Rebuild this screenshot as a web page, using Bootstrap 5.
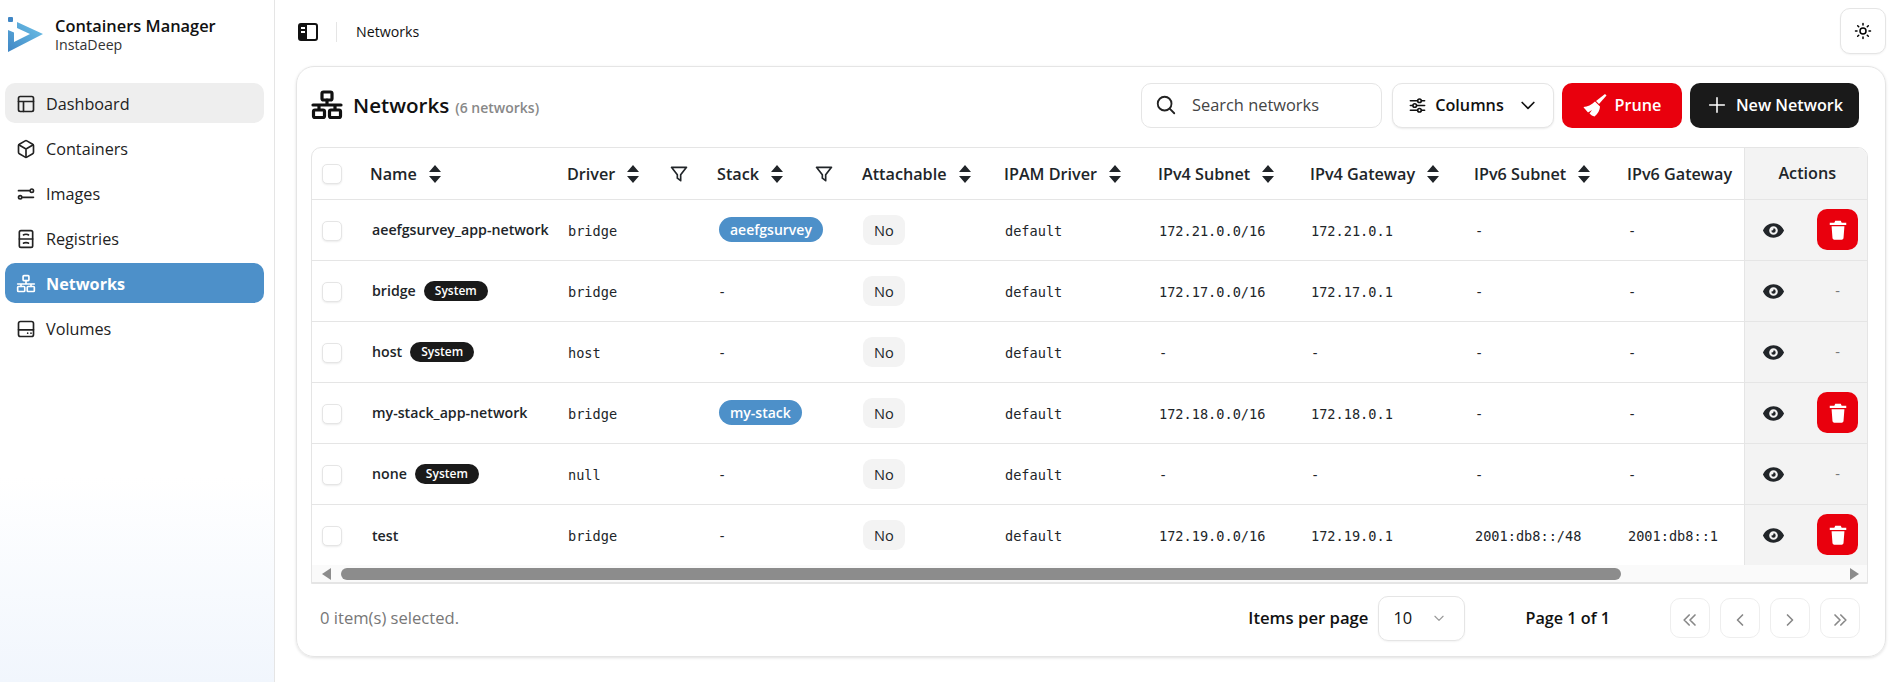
<!DOCTYPE html>
<html lang="en">
<head>
    <meta charset="UTF-8">
    <meta name="viewport" content="width=device-width, initial-scale=1.0">
    <title>Networks</title>
    <link href="https://cdn.jsdelivr.net/npm/bootstrap@5.3.3/dist/css/bootstrap.min.css" rel="stylesheet">
    <style>
        html, body { height: 100%; }
        body { font-family: "Open Sans", "Noto Sans", sans-serif; color: #111; background: #fff; overflow: hidden; }
        svg.ic { fill: none; stroke: currentColor; stroke-width: 2; stroke-linecap: round; stroke-linejoin: round; flex-shrink: 0; }
        svg.solid { fill: currentColor; stroke: none; flex-shrink: 0; }

        .side-bar { width: 275px; flex-shrink: 0; border-right: 1px solid #e5e5e5; background: linear-gradient(to bottom, #fff 70%, #f1f6fd 100%); padding: 17px 10px 0 5px; }
        .brand-row { padding-left: 3px; height: 35px; gap: 12px; margin-bottom: 31px; }
        .brand-name { font-size: 16.4px; font-weight: 600; line-height: 21px; }
        .brand-sub { font-size: 14.2px; line-height: 18px; color: #333; }
        .side-link { height: 40px; gap: 10px; padding: 2px 0 0 11px; margin-bottom: 5px; border-radius: 10px; color: #222; font-size: 16.2px; text-decoration: none; }
        .side-link.hover-on { background: #eee; }
        .side-link.active-on { background: #4d90c9; color: #fff; font-weight: 700; }

        .top-row { height: 64px; margin-bottom: 2px; padding: 0 7px 0 21px; }
        .top-sep { width: 1px; height: 20px; background: #e5e5e5; margin: 0 19px 0 16px; }
        .crumb { font-size: 14.2px; }
        .theme-btn { width: 46px; height: 46px; margin-top: -2px; border: 1px solid #e5e5e5; border-radius: 10px; background: #fff; box-shadow: 0 1px 2px rgba(0,0,0,.05); }

        .main-card { margin: 0 7px 0 21px; height: 591px; border: 1px solid #e5e5e5; border-radius: 18px; box-shadow: 0 1px 3px rgba(0,0,0,.12); padding: 15px 17px 0 14px; }
        .title-row { height: 46px; margin-bottom: 19px; padding-right: 9px; }
        .title-text { font-size: 20.6px; font-weight: 600; margin: 0 6px 0 10px; }
        .title-count { font-size: 14px; font-weight: 600; color: #888; padding-top: 5px; }
        .search-box { width: 241px; height: 45px; gap: 15px; padding-left: 13px; margin-right: 2px; border: 1px solid #e5e5e5; border-radius: 10px; color: #444; font-size: 16.4px; flex-shrink: 0; }
        .tool-btn { height: 45px; border-radius: 10px; font-size: 16.2px; font-weight: 600; gap: 8px; border: 1px solid transparent; padding: 0; flex-shrink: 0; }
        .btn-cols { width: 162px; background: #fff; border-color: #e5e5e5; box-shadow: 0 1px 2px rgba(0,0,0,.08); color: #111; }
        .btn-prune { width: 120px; background: #e9000d; color: #fff; }
        .btn-new { width: 169px; background: #1a1a1a; color: #fff; }

        .table-box { border: 1px solid #e5e5e5; border-radius: 10px 10px 0 0; overflow: hidden; }
        .net-table { table-layout: fixed; width: 100%; margin: 0; font-size: 14.6px; }
        .net-table th, .net-table td { border-bottom: 1px solid #e5e5e5; vertical-align: middle; padding: 0 0 0 8px; white-space: nowrap; box-shadow: none; }
        .net-table thead th { height: 51px; font-weight: 600; font-size: 16.2px; }
        .net-table tbody td { height: 61px; }
        .net-table tbody tr:last-child td { border-bottom: 0; }
        .net-table .act-col { background: #f3f3f3; border-left: 1px solid #e5e5e5; padding: 0; }
        .th-inner { gap: 11px; padding-top: 2px; }
        .chk-box { display: block; width: 20px; height: 20px; margin: 2px 0 0 2px; border: 1px solid #e5e5e5; border-radius: 5px; background: #fff; box-shadow: 0 1px 2px rgba(0,0,0,.08); }
        .net-name { font-size: 14.2px; font-weight: 600; padding: 1px 0 0 2px; gap: 8px; }
        .sys-pill { background: #1a1a1a; color: #fff; border-radius: 10px; font-size: 12px; font-weight: 600; padding: 2px 11px; line-height: 16px; }
        .mono-text { font-family: "DejaVu Sans Mono", "Liberation Mono", monospace; font-size: 13.6px; padding: 3px 0 0 1px; display: block; }
        .stack-pill { display: inline-block; margin-left: 2px; background: #4d90c9; color: #fff; font-size: 14px; font-weight: 600; border-radius: 13px; padding: 0 11px; line-height: 25px; }
        .no-pill { display: inline-block; margin-left: 1px; background: #f3f3f3; font-size: 14.6px; font-weight: 500; border-radius: 9px; padding: 0 11px; line-height: 30px; }
        .act-row { padding: 0 12px 0 17px; }
        .act-row > svg { margin-top: 2px; }
        .del-btn { width: 41px; height: 41px; border: 0; padding: 0; border-radius: 10px; background: #e9000d; color: #fff; }
        .no-del { width: 41px; text-align: center; color: #777; }

        .scroll-row { height: 18px; padding: 0 8px 0 10px; background: #fafafa; gap: 10px; border: 1px solid #e5e5e5; border-width: 0 0 1px; }
        .arrow-l { width: 0; height: 0; border-style: solid; border-width: 6px 9px 6px 0; border-color: transparent #8c8c8c transparent transparent; }
        .arrow-r { width: 0; height: 0; border-style: solid; border-width: 6px 0 6px 9px; border-color: transparent transparent transparent #8c8c8c; }
        .scroll-track { height: 12px; }
        .scroll-thumb { height: 12px; width: 85.4%; background: #8c8c8c; border-radius: 6px; }

        .foot-row { height: 68px; padding: 0 8px 0 9px; }
        .sel-count { font-size: 16.6px; color: #777; }
        .foot-label { font-size: 16.2px; font-weight: 600; }
        .foot-label.per-label { font-size: 16.7px; }
        .per-select { width: 87px; height: 45px; margin: 0 60px 0 10px; padding: 0 18px 0 14px; border: 1px solid #e5e5e5; border-radius: 10px; font-size: 16.4px; box-shadow: 0 1px 2px rgba(0,0,0,.05); }
        .page-btn { width: 40px; height: 40px; padding: 0; margin-left: 10px; border: 1px solid #eee; border-radius: 10px; background: #fff; color: #888; }
    </style>
</head>
<body class="d-flex">
<aside class="side-bar">
    <div class="brand-row d-flex align-items-center">
        <svg width="35" height="35" viewBox="0 0 35 35">
            <defs><linearGradient id="logoGrad" x1="0" y1="1" x2="1" y2="0"><stop offset="0" stop-color="#3f86c5"/><stop offset="1" stop-color="#6fc3e8"/></linearGradient></defs>
            <rect x="0" y="0" width="5" height="5" rx="1" fill="#3f86c5"/>
            <path d="M9 5L35 17 0 35V13l6 2.500V25L22 17 9 11Z" fill="url(#logoGrad)"/>
        </svg>
        <div>
            <div class="brand-name">Containers Manager</div>
            <div class="brand-sub">InstaDeep</div>
        </div>
    </div>
    <nav id="sideNav"></nav>
</aside>

<main class="flex-grow-1" style="min-width:0">
    <div class="top-row d-flex align-items-center">
        <svg class="solid" width="24" height="24" viewBox="0 0 24 24"><path fill-rule="evenodd" d="M5 3h14a3 3 0 0 1 3 3v12a3 3 0 0 1-3 3H5a3 3 0 0 1-3-3V6a3 3 0 0 1 3-3Zm6 2v14h8a1 1 0 0 0 1-1V6a1 1 0 0 0-1-1ZM5 7v2h4V7Zm0 4v2h4v-2Z"/></svg>
        <span class="top-sep"></span>
        <span class="crumb">Networks</span>
        <button class="theme-btn ms-auto d-flex align-items-center justify-content-center">
            <svg class="ic" width="18" height="18" viewBox="0 0 24 24"><circle cx="12" cy="12" r="4"/><path d="M12 2v2M12 20v2M4.900 4.900l1.400 1.400M17.700 17.700l1.400 1.400M2 12h2M20 12h2M4.900 19.100l1.400-1.400M17.700 6.300l1.400-1.400"/></svg>
        </button>
    </div>

    <section class="main-card">
        <div class="title-row d-flex align-items-center">
            <svg class="ic" width="32" height="32" viewBox="0 0 32 32" style="stroke-width:3.200"><rect x="11" y="3" width="10" height="8" rx="1.500"/><path d="M16 11v5M2 16h28M8 16v4M24 16v4"/><rect x="2.500" y="21" width="11" height="7.500" rx="1.500"/><rect x="18.500" y="21" width="11" height="7.500" rx="1.500"/></svg>
            <span class="title-text">Networks</span>
            <span class="title-count">(6 networks)</span>
            <div class="search-box d-flex align-items-center ms-auto">
                <svg class="ic" width="22" height="22" viewBox="0 0 24 24" style="color:#222"><circle cx="10.500" cy="10.500" r="7.500"/><path d="M21 21l-5-5"/></svg>
                Search networks
            </div>
            <button class="tool-btn btn-cols d-flex align-items-center justify-content-center ms-2">
                <svg class="ic" width="19" height="19" viewBox="0 0 24 24"><path d="M3 6h9M17 6h4M3 12h3M11 12h10M3 18h9M17 18h4"/><circle cx="14.500" cy="6" r="2.300"/><circle cx="8.500" cy="12" r="2.300"/><circle cx="14.500" cy="18" r="2.300"/></svg>
                Columns
                <svg class="ic" width="20" height="20" viewBox="0 0 24 24" style="margin-left:6px"><path d="M5 9l7 7 7-7"/></svg>
            </button>
            <button class="tool-btn btn-prune d-flex align-items-center justify-content-center ms-2">
                <svg class="solid" width="24" height="24" viewBox="0 0 24 24"><path d="M22 1l1.500 1.500-7.500 8.500-3-3Z"/><path d="M12 8.500l5 5c0 3.500-2 7-5.500 10-2-.5-3.500-1.500-5-3l2.500-3.500-4 2.500-3-3.500c-.5-.5-1-1-1.500-2 4-.5 8-2 11.500-5.500Z"/></svg>
                Prune
            </button>
            <button class="tool-btn btn-new d-flex align-items-center justify-content-center ms-2">
                <svg class="ic" width="22" height="22" viewBox="0 0 24 24" style="stroke-width:1.700"><path d="M12 4v16M4 12h16"/></svg>
                New Network
            </button>
        </div>

        <div class="table-box">
            <table class="table net-table">
                <colgroup>
                    <col style="width:50px"><col style="width:197px"><col style="width:150px"><col style="width:145px"><col style="width:142px"><col style="width:154px"><col style="width:152px"><col style="width:164px"><col style="width:153px"><col style="width:125px"><col style="width:126px">
                </colgroup>
                <thead><tr id="headRow"></tr></thead>
                <tbody id="netRows"></tbody>
            </table>
            <div class="scroll-row d-flex align-items-center">
                <span class="arrow-l"></span>
                <div class="scroll-track flex-grow-1"><div class="scroll-thumb"></div></div>
                <span class="arrow-r"></span>
            </div>
        </div>

        <div class="foot-row d-flex align-items-center">
            <span class="sel-count me-auto">0 item(s) selected.</span>
            <span class="foot-label per-label">Items per page</span>
            <div class="per-select d-flex align-items-center justify-content-between">
                10
                <svg class="ic" width="14" height="14" viewBox="0 0 24 24" style="color:#999"><path d="M5 9l7 7 7-7"/></svg>
            </div>
            <span class="foot-label" style="margin-right:50px">Page 1 of 1</span>
            <button class="page-btn"><svg class="ic" width="20" height="20" viewBox="0 0 24 24"><path d="M11 6l-6 6 6 6M18 6l-6 6 6 6"/></svg></button>
            <button class="page-btn"><svg class="ic" width="20" height="20" viewBox="0 0 24 24"><path d="M15 6l-6 6 6 6"/></svg></button>
            <button class="page-btn"><svg class="ic" width="20" height="20" viewBox="0 0 24 24"><path d="M9 6l6 6-6 6"/></svg></button>
            <button class="page-btn"><svg class="ic" width="20" height="20" viewBox="0 0 24 24"><path d="M6 6l6 6-6 6M13 6l6 6-6 6"/></svg></button>
        </div>
    </section>
</main>

<script>
    const sortIcon = '<svg class="solid" width="14" height="20" viewBox="0 0 14 20"><path d="M7 1l6 7H1ZM7 19l-6-7h12Z"/></svg>';
    const filterIcon = '<svg class="ic" width="20" height="20" viewBox="0 0 24 24" style="margin-left:auto;margin-right:20px"><path d="M3 4h18l-7 9v7l-4-3v-4Z"/></svg>';
    const eyeIcon = '<svg class="solid" width="23" height="23" viewBox="0 0 24 24"><path fill-rule="evenodd" d="M12 4.500c5 0 9 3 11 7.500-2 4.500-6 7.500-11 7.500S3 16.500 1 12c2-4.500 6-7.500 11-7.500Zm0 3a4.500 4.500 0 1 0 0 9 4.500 4.500 0 0 0 0-9Zm0 2.200a2.300 2.300 0 1 1-2.300 2.300c1.200.3 2.600-.9 2.300-2.300Z"/></svg>';
    const trashIcon = '<svg class="solid" width="22" height="22" viewBox="0 0 24 24"><path d="M9 2h6l1 2h5v2.500H3V4h5ZM5 8h14l-1 13a2 2 0 0 1-2 1.500H8A2 2 0 0 1 6 21Z"/></svg>';

    const navItems = [
        ['Dashboard', '<rect x="3" y="3" width="18" height="18" rx="2"/><path d="M3 9h18M9 9v12"/>', 'hover-on'],
        ['Containers', '<path d="M21 8a2 2 0 0 0-1-1.730l-7-4a2 2 0 0 0-2 0l-7 4A2 2 0 0 0 3 8v8a2 2 0 0 0 1 1.730l7 4a2 2 0 0 0 2 0l7-4a2 2 0 0 0 1-1.730Z"/><path d="M3.300 7 12 12l8.700-5M12 22V12"/>', ''],
        ['Images', '<path d="M3 8h13M8 16h13"/><circle cx="19" cy="8" r="2"/><circle cx="5" cy="16" r="2"/>', ''],
        ['Registries', '<rect x="4" y="2" width="16" height="20" rx="2"/><path d="M4 12h16M9 7c1-1 5-1 6 0M9 17c1-1 5-1 6 0"/>', ''],
        ['Networks', '<rect x="8.500" y="2" width="7" height="6" rx="1"/><path d="M12 8v4M2 12h20M6 12v3M18 12v3"/><rect x="2" y="15" width="8.500" height="6" rx="1"/><rect x="13.500" y="15" width="8.500" height="6" rx="1"/>', 'active-on'],
        ['Volumes', '<rect x="3" y="3" width="18" height="18" rx="2.500"/><path d="M3 13h18M14 17h.01M18 17h.01"/>', '']
    ];
    document.getElementById('sideNav').innerHTML = navItems.map(n =>
        `<a href="#" class="side-link d-flex align-items-center ${n[2]}"><svg class="ic" width="20" height="20" viewBox="0 0 24 24">${n[1]}</svg>${n[0]}</a>`
    ).join('');

    const columns = [
        ['Name', 1, 0], ['Driver', 1, 1], ['Stack', 1, 1], ['Attachable', 1, 0], ['IPAM Driver', 1, 0],
        ['IPv4 Subnet', 1, 0], ['IPv4 Gateway', 1, 0], ['IPv6 Subnet', 1, 0], ['IPv6 Gateway', 0, 0]
    ];
    document.getElementById('headRow').innerHTML =
        '<th><span class="chk-box"></span></th>' +
        columns.map(c => `<th><div class="th-inner d-flex align-items-center">${c[0]}${c[1] ? sortIcon : ''}${c[2] ? filterIcon : ''}</div></th>`).join('') +
        '<th class="act-col text-center">Actions</th>';

    const networks = [
        { name: 'aeefgsurvey_app-network', driver: 'bridge', stack: 'aeefgsurvey', v4: '172.21.0.0/16', gw: '172.21.0.1', v6: '-', gw6: '-' },
        { name: 'bridge', system: true, driver: 'bridge', stack: '', v4: '172.17.0.0/16', gw: '172.17.0.1', v6: '-', gw6: '-' },
        { name: 'host', system: true, driver: 'host', stack: '', v4: '-', gw: '-', v6: '-', gw6: '-' },
        { name: 'my-stack_app-network', driver: 'bridge', stack: 'my-stack', v4: '172.18.0.0/16', gw: '172.18.0.1', v6: '-', gw6: '-' },
        { name: 'none', system: true, driver: 'null', stack: '', v4: '-', gw: '-', v6: '-', gw6: '-' },
        { name: 'test', driver: 'bridge', stack: '', v4: '172.19.0.0/16', gw: '172.19.0.1', v6: '2001:db8::/48', gw6: '2001:db8::1' }
    ];
    const mono = v => `<td><span class="mono-text">${v}</span></td>`;
    document.getElementById('netRows').innerHTML = networks.map(n => `<tr>
        <td><span class="chk-box"></span></td>
        <td><div class="net-name d-flex align-items-center">${n.name}${n.system ? '<span class="sys-pill">System</span>' : ''}</div></td>
        ${mono(n.driver)}
        <td>${n.stack ? `<span class="stack-pill">${n.stack}</span>` : '<span class="mono-text">-</span>'}</td>
        <td><span class="no-pill">No</span></td>
        ${mono('default')}${mono(n.v4)}${mono(n.gw)}${mono(n.v6)}${mono(n.gw6)}
        <td class="act-col"><div class="act-row d-flex align-items-center justify-content-between">${eyeIcon}${n.system ? '<span class="no-del">-</span>' : `<button class="del-btn">${trashIcon}</button>`}</div></td>
    </tr>`).join('');
</script>
<script src="https://cdn.jsdelivr.net/npm/bootstrap@5.3.3/dist/js/bootstrap.bundle.min.js"></script>
</body>
</html>
